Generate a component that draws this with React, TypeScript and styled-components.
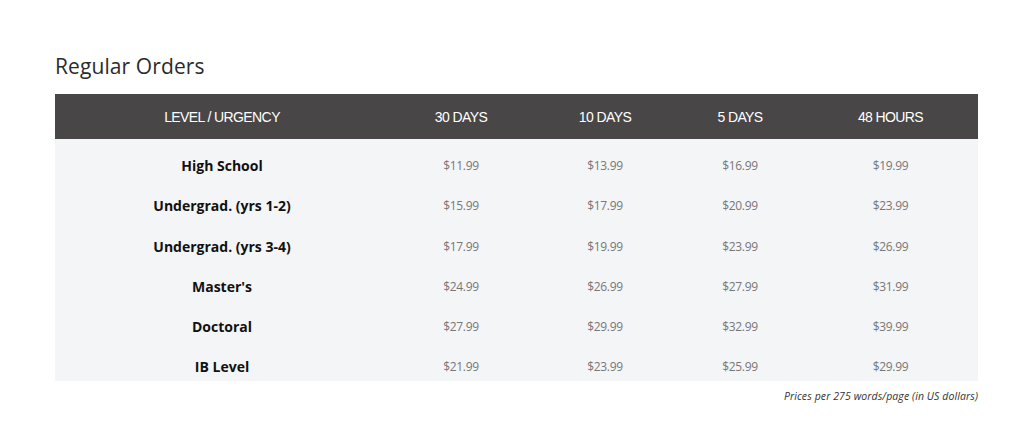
import styled, { createGlobalStyle } from 'styled-components'

const GlobalStyle = createGlobalStyle`
  html, body {
    margin: 0;
    padding: 0;
    background: #ffffff;
  }
  body {
    font-family: 'Open Sans', 'Liberation Sans', sans-serif;
  }
`

const Page = styled.div`
  width: 1024px;
  height: 437px;
  padding: 52px 46px 0 55px;
  box-sizing: border-box;
`

const Title = styled.h2`
  margin: 0 0 14px;
  font-size: 21px;
  line-height: 28px;
  font-weight: 400;
  color: #2b2b2b;
  letter-spacing: 0.1px;
`

const COLS = '334px 144px 144px 126px 175px'

const Table = styled.div`
  width: 923px;
`

const HeaderRow = styled.div`
  display: grid;
  grid-template-columns: ${COLS};
  height: 45px;
  align-items: center;
  background: #484646;
`

const HeaderCell = styled.div`
  text-align: center;
  font-family: 'Liberation Sans', Arial, sans-serif;
  font-size: 14px;
  color: #ffffff;
  letter-spacing: -0.6px;
`

const Body = styled.div`
  background: #f4f5f7;
  display: grid;
  grid-auto-rows: 40.3px;
`

const Row = styled.div`
  display: grid;
  grid-template-columns: ${COLS};
  align-items: start;
  padding-top: 19px;
  line-height: 16px;
`

const LevelCell = styled.div`
  text-align: center;
  font-size: 14px;
  font-weight: 700;
  color: #111111;
`

const PriceCell = styled.div`
  text-align: center;
  font-size: 12px;
  font-weight: 400;
  color: #777777;
  letter-spacing: -0.3px;
`

const Note = styled.p`
  margin: 8px 0 0;
  width: 923px;
  text-align: right;
  font-size: 10.5px;
  line-height: 14px;
  font-style: italic;
  color: #333333;
  letter-spacing: 0.1px;
`

const headers = ['LEVEL / URGENCY', '30 DAYS', '10 DAYS', '5 DAYS', '48 HOURS']

const rows: { level: string; prices: string[] }[] = [
  { level: 'High School', prices: ['$11.99', '$13.99', '$16.99', '$19.99'] },
  { level: 'Undergrad. (yrs 1-2)', prices: ['$15.99', '$17.99', '$20.99', '$23.99'] },
  { level: 'Undergrad. (yrs 3-4)', prices: ['$17.99', '$19.99', '$23.99', '$26.99'] },
  { level: "Master's", prices: ['$24.99', '$26.99', '$27.99', '$31.99'] },
  { level: 'Doctoral', prices: ['$27.99', '$29.99', '$32.99', '$39.99'] },
  { level: 'IB Level', prices: ['$21.99', '$23.99', '$25.99', '$29.99'] },
]

export default function App() {
  return (
    <>
      <GlobalStyle />
      <Page>
        <Title>Regular Orders</Title>
        <Table>
          <HeaderRow>
            {headers.map((h) => (
              <HeaderCell key={h}>{h}</HeaderCell>
            ))}
          </HeaderRow>
          <Body>
            {rows.map((r) => (
              <Row key={r.level}>
                <LevelCell>{r.level}</LevelCell>
                {r.prices.map((p, i) => (
                  <PriceCell key={i}>{p}</PriceCell>
                ))}
              </Row>
            ))}
          </Body>
        </Table>
        <Note>Prices per 275 words/page (in US dollars)</Note>
      </Page>
    </>
  )
}
